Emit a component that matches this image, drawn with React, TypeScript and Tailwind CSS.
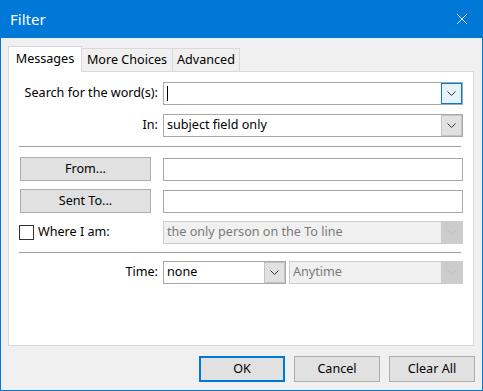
import { X } from "lucide-react";

const font = { fontFamily: '"Segoe UI", "Noto Sans", "Open Sans", sans-serif' };

type ArrowProps = { tone: "focus" | "normal" | "disabled" };

const DropArrow = ({ tone }: ArrowProps) => {
	const box =
		tone === "focus"
			? "bg-[#e5f1fb] border-[#0078d7]"
			: tone === "normal"
				? "bg-[#e1e1e1] border-[#c4c4c4]"
				: "bg-[#cccccc] border-[#cccccc]";
	const stroke = tone === "disabled" ? "#bfbfbf" : "#333333";
	return (
		<div className={`w-[21px] h-[21px] border flex items-center justify-center shrink-0 ${box}`}>
			<svg width="9" height="5" viewBox="0 0 9 5" fill="none">
				<path d="M0.5 0.5L4.5 4.5L8.5 0.5" stroke={stroke} strokeWidth="1" />
			</svg>
		</div>
	);
};

type ComboProps = {
	width: string;
	text?: string;
	tone: "focus" | "normal" | "disabled";
	caret?: boolean;
};

const Combo = ({ width, text, tone, caret }: ComboProps) => {
	const disabled = tone === "disabled";
	return (
		<div
			className={`${width} h-[23px] border flex items-center justify-between ${
				disabled ? "bg-[#f0f0f0] border-[#cccccc] text-[#7a7a7a]" : "bg-white border-[#a8a8a8] text-black"
			}`}
		>
			<div className="flex items-center pl-[3px] text-[12.6px] leading-none">
				{caret && <span className="w-px h-[15px] bg-black"></span>}
				{text}
			</div>
			<DropArrow tone={tone} />
		</div>
	);
};

const TextBox = () => <div className="w-[300px] h-[23px] border border-[#a8a8a8] bg-white"></div>;

const Btn = ({ label, width, primary }: { label: string; width: string; primary?: boolean }) => (
	<div
		className={`${width} h-[24px] bg-[#e1e1e1] flex items-center justify-center text-[12.6px] text-black ${
			primary ? "border-2 border-[#0078d7]" : "border border-[#adadad]"
		}`}
	>
		{label}
	</div>
);

const Separator = () => <div className="ml-[10px] w-[442px] h-px bg-[#a0a0a0]"></div>;

export default function App() {
	return (
		<div className="w-[483px] h-[391px] bg-[#0078d7] flex flex-col" style={font}>
			{/* Title bar */}
			<div className="h-[38px] flex items-center justify-between pl-[10px] pr-[12px] text-white shrink-0">
				<span className="text-[15px]">Filter</span>
				<X size={18} strokeWidth={1.2} color="white" />
			</div>

			{/* Body */}
			<div className="flex-1 mx-px mb-px bg-[#f0f0f0] flex flex-col pt-[8px] pl-[7px]">
				{/* Tabs */}
				<div className="flex items-end h-[25px] text-[12.6px] text-black">
					<div className="relative z-10 w-[74px] h-[26px] bg-white border border-b-0 border-[#d9d9d9] flex items-center justify-center -mb-px">
						Messages
					</div>
					<div className="w-[91px] h-[23px] bg-[#f0f0f0] border border-l-0 border-b-0 border-[#d9d9d9] flex items-center justify-center">
						More Choices
					</div>
					<div className="w-[67px] h-[23px] bg-[#f0f0f0] border border-l-0 border-b-0 border-[#d9d9d9] flex items-center justify-center">
						Advanced
					</div>
				</div>

				{/* Panel */}
				<div className="w-[466px] h-[275px] bg-white border border-[#d9d9d9] flex flex-col text-[12.6px] text-black">
					<div className="flex items-center mt-[10px]">
						<span className="w-[149px] text-right">Search for the word(s):</span>
						<div className="ml-[5px]">
							<Combo width="w-[300px]" tone="focus" caret />
						</div>
					</div>
					<div className="flex items-center mt-[9px]">
						<span className="w-[149px] text-right">In:</span>
						<div className="ml-[5px]">
							<Combo width="w-[300px]" tone="normal" text="subject field only" />
						</div>
					</div>

					<div className="mt-[9px]">
						<Separator />
					</div>

					<div className="flex items-center mt-[10px]">
						<div className="ml-[11px]">
							<Btn label="From..." width="w-[131px]" />
						</div>
						<div className="ml-[12px]">
							<TextBox />
						</div>
					</div>
					<div className="flex items-center mt-[8px]">
						<div className="ml-[11px]">
							<Btn label="Sent To..." width="w-[131px]" />
						</div>
						<div className="ml-[12px]">
							<TextBox />
						</div>
					</div>
					<div className="flex items-center mt-[8px]">
						<div className="ml-[10px] w-[144px] flex items-center">
							<div className="w-[15px] h-[15px] border border-[#333333] bg-white"></div>
							<span className="ml-[4px]">Where I am:</span>
						</div>
						<Combo width="w-[300px]" tone="disabled" text="the only person on the To line" />
					</div>

					<div className="mt-[8px]">
						<Separator />
					</div>

					<div className="flex items-center mt-[8px]">
						<span className="w-[149px] text-right">Time:</span>
						<div className="ml-[5px] flex items-center gap-[3px]">
							<Combo width="w-[123px]" tone="normal" text="none" />
							<Combo width="w-[174px]" tone="disabled" text="Anytime" />
						</div>
					</div>
				</div>

				{/* Footer buttons */}
				<div className="flex justify-end gap-[9px] mt-[10px] pr-[7px]">
					<Btn label="OK" width="w-[86px] h-[26px]" primary />
					<Btn label="Cancel" width="w-[86px] h-[26px]" />
					<Btn label="Clear All" width="w-[86px] h-[26px]" />
				</div>
			</div>
		</div>
	);
}
